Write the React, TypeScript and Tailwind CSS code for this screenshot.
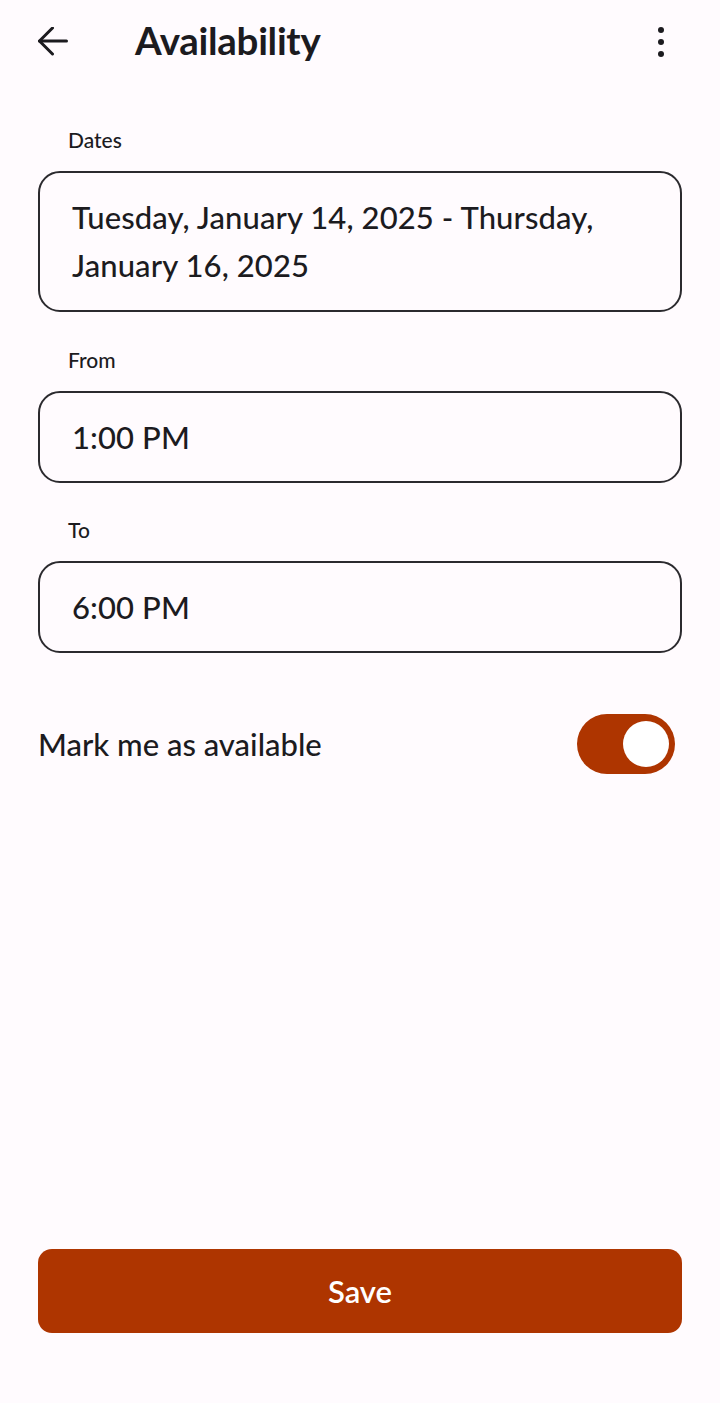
import { useState } from "react";

function Field({ label, value, tall }: { label: string; value: React.ReactNode; tall?: boolean }) {
  return (
    <div className={tall ? "mb-[1px] flex flex-col" : "flex flex-col"}>
      <span className="pl-[30px] text-[21px] font-medium leading-[24px] text-[#1c1b1f]">{label}</span>
      <div
        className={
          tall
            ? "mt-[19px] rounded-[22px] border-2 border-[#2b2a2e] px-[32px] pb-[21px] pt-[20px] text-[31px] font-medium leading-[48px] tracking-[0.1px] text-[#1c1b1f]"
            : "mt-[19px] rounded-[22px] border-2 border-[#2b2a2e] px-[32px] py-[20px] text-[31px] font-medium leading-[48px] tracking-[0.1px] text-[#1c1b1f]"
        }
      >
        {value}
      </div>
    </div>
  );
}

export default function App() {
  const [available, setAvailable] = useState(true);

  return (
    <div
      className="flex min-h-[1403px] w-[720px] flex-col bg-[#fffbfe] text-[#1c1b1f]"
      style={{ fontFamily: "Lato, 'Noto Sans', sans-serif" }}
    >
      <header className="flex h-[84px] items-center pl-[38px] pr-[52px]">
        <button className="flex h-[30px] w-[30px] items-center justify-center" aria-label="Back">
          <svg width="30" height="30" viewBox="0 0 30 30" fill="none" stroke="#1c1b1f" strokeWidth="3" strokeLinecap="round" strokeLinejoin="round">
            <path d="M28.5 14H1.5" />
            <path d="M14.5 1L1.5 14L14.5 27" />
          </svg>
        </button>
        <h1 className="ml-[67px] -mt-[3px] flex-1 text-[38.5px] font-bold leading-none tracking-[-0.3px]">Availability</h1>
        <button className="flex h-[30px] w-[14px] flex-col items-center justify-between" aria-label="More">
          <span className="h-[6px] w-[6px] rounded-full bg-[#1c1b1f]" />
          <span className="h-[6px] w-[6px] rounded-full bg-[#1c1b1f]" />
          <span className="h-[6px] w-[6px] rounded-full bg-[#1c1b1f]" />
        </button>
      </header>

      <main className="flex flex-1 flex-col px-[38px] pt-[44px]">
        <div className="flex flex-col gap-[35px]">
          <Field tall label="Dates" value="Tuesday, January 14, 2025 - Thursday, January 16, 2025" />
          <Field label="From" value="1:00 PM" />
          <Field label="To" value="6:00 PM" />
        </div>

        <div className="mt-[61px] flex items-center justify-between">
          <span className="text-[31px] font-medium leading-[40px]">Mark me as available</span>
          <button
            onClick={() => setAvailable((v) => !v)}
            className={
              available
                ? "mr-[7px] flex h-[60px] w-[98px] items-center justify-end rounded-full bg-[#ae3500] pr-[6px]"
                : "mr-[7px] flex h-[60px] w-[98px] items-center justify-start rounded-full border-2 border-[#79747e] bg-[#e7e0ec] pl-[8px]"
            }
            aria-pressed={available}
          >
            <span className={available ? "h-[46px] w-[46px] rounded-full bg-white" : "h-[28px] w-[28px] rounded-full bg-[#79747e]"} />
          </button>
        </div>

        <div className="flex-1" />

        <button className="mb-[70px] h-[84px] w-full rounded-[14px] bg-[#ae3500] text-[31px] font-semibold text-white">
          Save
        </button>
      </main>
    </div>
  );
}
